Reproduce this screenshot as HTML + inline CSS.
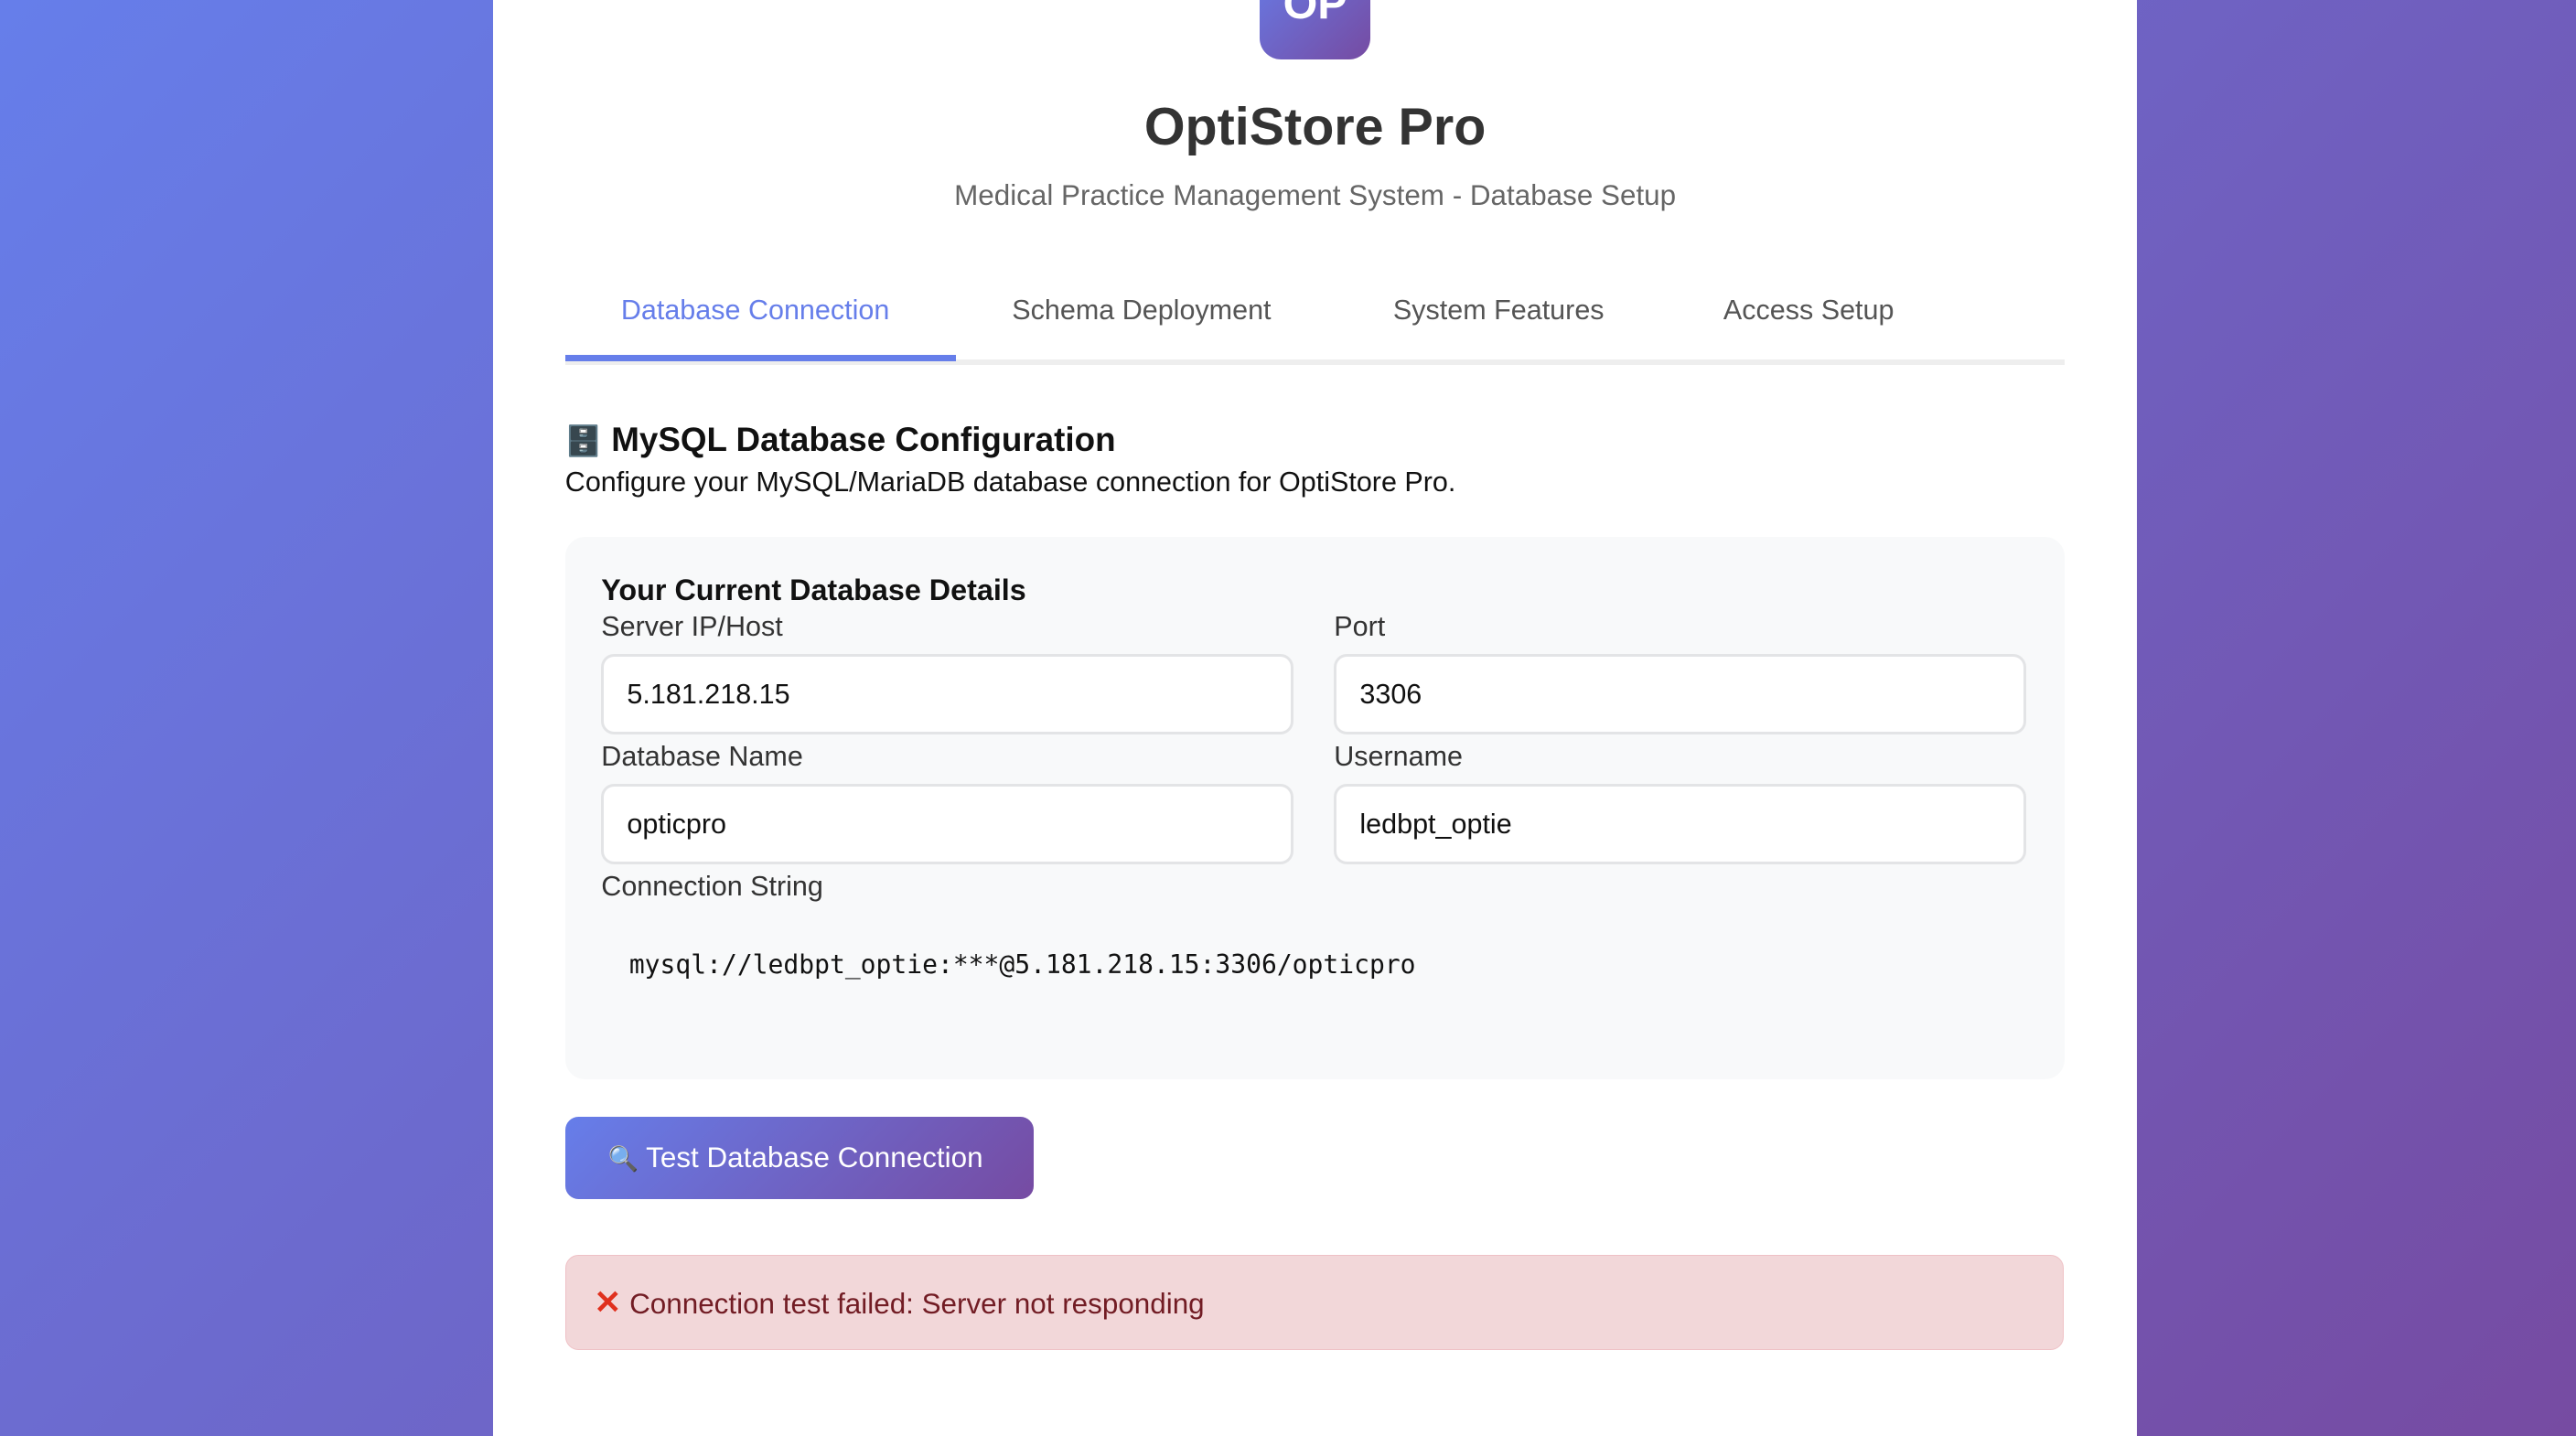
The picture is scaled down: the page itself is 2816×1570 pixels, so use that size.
<!DOCTYPE html>
<html><head><meta charset="utf-8"><style>
html{margin:0;padding:0;height:100%;overflow:hidden;background:linear-gradient(135deg,#667eea 0%,#764ba2 100%)}
body{margin:0;padding:0;width:1568px;height:874px;overflow:hidden;zoom:1.7959;background:transparent;font-family:"Liberation Sans",Arial,sans-serif;position:relative}
.card{position:absolute;left:300px;top:0;width:1001px;height:874px;background:#fff}
.abs{position:absolute}
.logo{left:467px;top:-31px;width:67px;height:67px;border-radius:13px;background:linear-gradient(135deg,#667eea,#764ba2);color:#fff;font-weight:bold;font-size:27px;line-height:67px;text-align:center}
.title{left:0;width:1001px;text-align:center;top:58px;font-size:32px;font-weight:bold;color:#333;line-height:40px}
.sub{left:0;width:1001px;text-align:center;top:107px;font-size:17.5px;color:#666;line-height:24px}
.tab{top:177px;font-size:17px;color:#555;line-height:24px}
.tabline{left:44px;top:219px;width:913px;height:3px;background:#eee}
.tabact{left:44px;top:216px;width:238px;height:4px;background:#667eea}
.h{left:44px;top:255px;font-size:20.5px;font-weight:bold;color:#111;line-height:26px}
.desc{left:44px;top:283px;font-size:17px;color:#111;line-height:22px}
.box{left:44px;top:327px;width:913px;height:330px;background:#f8f9fa;border-radius:12px}
.lbl{font-size:17px;color:#333;line-height:22px}
.inp{width:404px;height:46px;border:2px solid #e3e4e6;border-radius:8px;background:#fff;font-size:17px;color:#111;line-height:46px;padding-left:14px;box-sizing:content-box}
.btn{left:44px;top:680px;width:285px;height:50px;border-radius:8px;background:linear-gradient(135deg,#667eea,#764ba2);color:#fff;font-size:17.5px;line-height:50px}
.err{left:44px;top:764px;width:911px;height:57px;border:1px solid #efc1c6;border-radius:8px;background:#f2d7d9;color:#721c24;font-size:17.5px;line-height:57px}
</style></head><body>
<div class="card">
<div class="abs logo">OP</div>
<div class="abs title">OptiStore Pro</div>
<div class="abs sub">Medical Practice Management System - Database Setup</div>
<div class="abs tabline"></div><div class="abs tabact"></div>
<div class="abs tab" style="left:78px;color:#667eea">Database Connection</div>
<div class="abs tab" style="left:316px">Schema Deployment</div>
<div class="abs tab" style="left:548px">System Features</div>
<div class="abs tab" style="left:749px">Access Setup</div>
<div class="abs h"><span style="font-size:18px">🗄️</span> MySQL Database Configuration</div>
<div class="abs desc">Configure your MySQL/MariaDB database connection for OptiStore Pro.</div>
<div class="abs box">
 <div class="abs" style="left:22px;top:22px;font-size:18px;font-weight:bold;color:#111">Your Current Database Details</div>
 <div class="abs lbl" style="left:22px;top:44px">Server IP/Host</div>
 <div class="abs lbl" style="left:468px;top:44px">Port</div>
 <div class="abs inp" style="left:22px;top:71px">5.181.218.15</div>
 <div class="abs inp" style="left:468px;top:71px">3306</div>
 <div class="abs lbl" style="left:22px;top:123px">Database Name</div>
 <div class="abs lbl" style="left:468px;top:123px">Username</div>
 <div class="abs inp" style="left:22px;top:150px">opticpro</div>
 <div class="abs inp" style="left:468px;top:150px">ledbpt_optie</div>
 <div class="abs lbl" style="left:22px;top:202px">Connection String</div>
 <div class="abs" style="left:39px;top:251px;font-family:'DejaVu Sans Mono','Liberation Mono',monospace;font-size:15.6px;color:#111">mysql://ledbpt_optie:***@5.181.218.15:3306/opticpro</div>
</div>
<div class="abs btn"><span style="margin-left:26px;font-size:15px">🔍</span> Test Database Connection</div>
<div class="abs err"><span style="margin-left:17px;color:#e0301e;font-weight:bold;font-size:20px">✕</span> Connection test failed: Server not responding</div>
</div>
</body></html>
